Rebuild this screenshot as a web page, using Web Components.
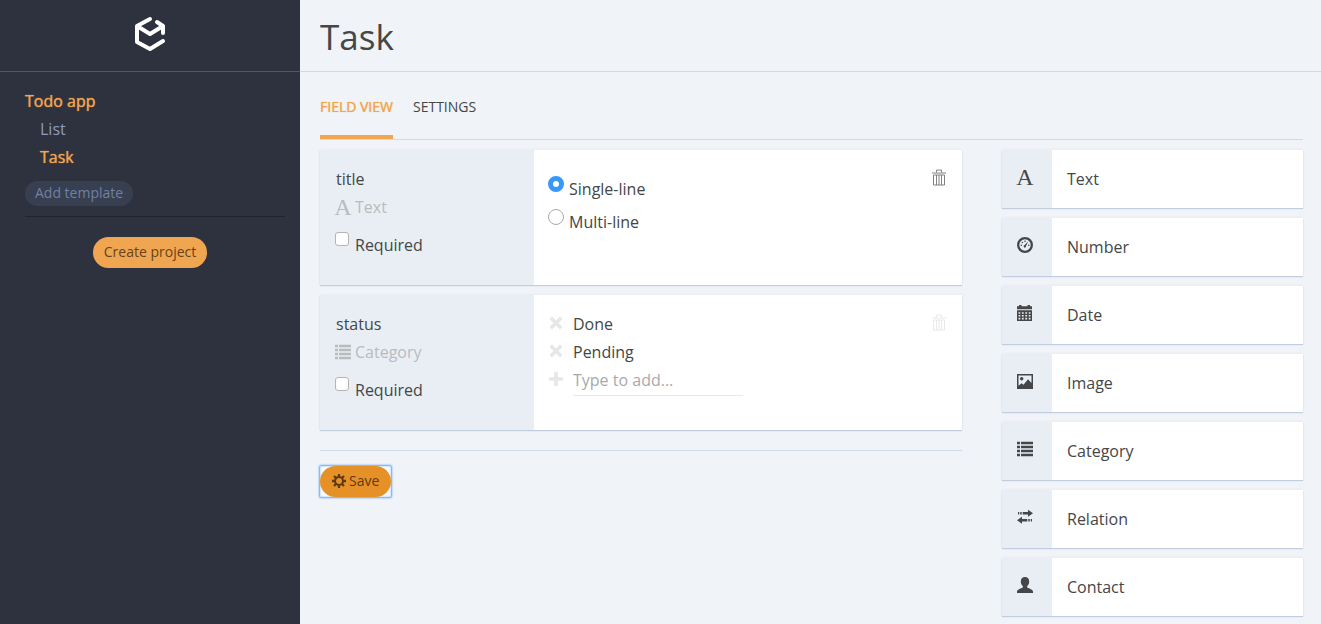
<!DOCTYPE html>
<html lang="en">
<head>
<meta charset="utf-8">
<title>Task – Todo app</title>
<style>
  :root {
    --ink: #444648;
    --accent: #f0a650;
    --panel: #e9eef5;
    --line: #d0d9e8;
    --card-shadow: 0 1px 1px #c3cde0, 0 0 2px #dde3ee;
  }
  body {
    margin: 0;
    background: #f0f3f8;
    color: var(--ink);
    font: 16px/28px "Open Sans", "Noto Sans", sans-serif;
  }
</style>
</head>
<body>
<template-editor></template-editor>

<script>
const bars = [0, 4, 8, 12].map(y => `<path d="M0 ${y + .5}h3v2.6H0zM4 ${y + .5}h12v2.6H4z"/>`).join('');
const ICONS = {
  list: `<g transform="translate(0 .2)">${bars}</g>`,
  gauge: `<path fill-rule="evenodd" d="M8 0a8 8 0 1 1 0 16A8 8 0 0 1 8 0zm0 2.3a5.700 5.700 0 1 0 0 11.400A5.700 5.700 0 0 0 8 2.300z"/>
    <path d="M11.300 4.200 9 9.100a1.200 1.200 0 1 1-1.600-.8z"/><circle cx="4.300" cy="8.200" r=".8"/><circle cx="5.400" cy="5.500" r=".8"/><circle cx="8" cy="4.300" r=".8"/><circle cx="11.800" cy="8.200" r=".8"/>`,
  calendar: `<path fill-rule="evenodd" d="M0 1.300h2V0h2.500v1.300h6V0H13v1.300h2v3H0zM0 5.200h15V16H0zM1.500 7.200v1.600h1.800V7.200zm3.400 0v1.600h1.800V7.200zm3.400 0v1.600h1.800V7.200zm3.400 0v1.600h1.800V7.200zM1.500 10v1.600h1.800V10zm3.400 0v1.600h1.800V10zm3.400 0v1.600h1.800V10zm3.400 0v1.600h1.800V10zM1.500 12.800v1.600h1.800v-1.600zm3.400 0v1.600h1.800v-1.600zm3.400 0v1.600h1.800v-1.600zm3.400 0v1.600h1.800v-1.600z"/>`,
  image: `<path fill-rule="evenodd" d="M0 1h16v15H0zM1.500 2.500v10.300l3-2.600 2 1.500 4.500-5.400 3.500 3.800V2.500z"/><circle cx="4.700" cy="5.800" r="1.700"/>`,
  relation: `<path d="M1 3h1.200v2.600H1zM3.200 3h1.500v2.600H3.200zM5.700 3H11V.8L16 4.300l-5 3.500V5.600H5.700zM15 10h-1.200v2.600H15zM12.800 10h-1.500v2.600h1.500zM10.300 10H5V7.800L0 11.300l5 3.500v-2.200h5.300z"/>`,
  user: `<path d="M8 0c2.600 0 4.200 1.800 4.200 4.400 0 2-.8 3.700-2 4.700v1.300c2.200 1 5.800 2 5.800 4.300V16H0v-1.300c0-2.300 3.600-3.300 5.800-4.300V9.100c-1.200-1-2-2.700-2-4.700C3.800 1.800 5.400 0 8 0z"/>`,
  trash: `<path fill="none" stroke="currentColor" d="M1 3.500h14M5.500 3V.6h5V3M2.500 5.500h11v10h-11zM5.500 5.500v10M8 5.500v10M10.500 5.500v10"/>`,
  cross: `<path d="m1.500 4 2.500-2.500 4 4 4-4L14.500 4l-4 4 4 4-2.500 2.500-4-4-4 4L1.500 12l4-4z"/>`,
  plus: `<path d="M6.200 1h3.600v5.200H15v3.600H9.800V15H6.200V9.800H1V6.200h5.200z"/>`,
  gear: `<g fill="none" stroke="currentColor"><circle cx="8" cy="8" r="4.600" stroke-width="2.400"/><path stroke-width="2.600" d="M8 0v3M8 13v3M0 8h3M13 8h3M2.300 2.300l2.200 2.200M11.500 11.500l2.200 2.200M2.300 13.700l2.200-2.200M11.500 4.500l2.200-2.200"/></g>`
};

function define(name, html, setup) {
  const template = document.createElement('template');
  template.innerHTML = `<style>*{box-sizing:border-box}</style>${html}`;
  customElements.define(name, class extends HTMLElement {
    constructor() {
      super();
      this.attachShadow({ mode: 'open' }).append(template.content.cloneNode(true));
    }
    connectedCallback() { if (setup) setup(this, this.shadowRoot); }
  });
}

/* Square glyph; "letter" is the serif capital used for text fields. */
class UiIcon extends HTMLElement {
  static observedAttributes = ['name'];
  constructor() {
    super();
    this.attachShadow({ mode: 'open' });
  }
  attributeChangedCallback(attribute, previous, name) {
    this.shadowRoot.innerHTML = `
      <style>
        :host { display: inline-flex; flex: none; width: 16px; height: 16px; align-items: center; justify-content: center; }
        svg { display: block; width: 100%; height: 100%; fill: currentColor; }
        span { font: 24px/16px "Liberation Serif", serif; }
      </style>
      ${name === 'letter' ? '<span>A</span>' : `<svg viewBox="0 0 16 16" aria-hidden="true">${ICONS[name]}</svg>`}`;
  }
}
customElements.define('ui-icon', UiIcon);

define('app-sidebar', `
<style>
  :host { display: block; background: #2d323e; }
  header { display: flex; justify-content: center; align-items: center; height: 72px; padding-bottom: 4px; border-bottom: 1px solid #4d586f; }
  svg { width: 32px; height: 36px; }
  nav { padding: 15px 15px 0 25px; }
  a { display: block; color: #8d9cbe; text-decoration: none; }
  .on { color: var(--accent); text-shadow: 0 0 1px var(--accent); }
  .child { padding-left: 15px; }
  button { display: block; border: 0; font: inherit; cursor: pointer; }
  .add { height: 25px; margin-top: 10px; padding: 0 10px 2px; border-radius: 13px; background: #383f50; color: #7180a3; font-size: 14px; line-height: 22px; }
  hr { height: 1px; margin: 10px 0 20px; border: 0; background: #20242d; }
  .create { height: 31px; margin: 0 auto; padding: 0 11px 2px; border-radius: 16px; background: var(--accent); color: #67431a; font-size: 14px; line-height: 28px; }
  .wrap { padding-right: 10px; }
</style>
<header>
  <svg viewBox="0 0 32 36" fill="none" stroke="#fff" stroke-width="4" stroke-linecap="round" stroke-linejoin="round" role="img" aria-label="Logo">
    <path d="M16 3 3 10v16l13 7 13-8M3 10l13 8 13-8v7M29 10l-6-4"/>
  </svg>
</header>
<nav>
  <a class="on" href="#app">Todo app</a>
  <a class="child" href="#list">List</a>
  <a class="child on" href="#task" aria-current="page">Task</a>
  <button class="add" type="button">Add template</button>
  <hr>
  <div class="wrap"><button class="create" type="button">Create project</button></div>
</nav>`);

define('page-header', `
<style>
  :host { display: block; height: 72px; padding: 10px 20px; border-bottom: 1px solid var(--line); }
  h1 { margin: 0; font-size: 35px; line-height: 54px; font-weight: 400; }
</style>
<h1><slot></slot></h1>`);

define('tab-bar', `
<style>
  :host { display: flex; gap: 20px; border-bottom: 1px solid var(--line); }
  a { padding: 21px 0 14px; border-bottom: 4px solid transparent; color: var(--ink); font-size: 14px; text-transform: uppercase; text-decoration: none; }
  .on { border-color: var(--accent); color: var(--accent); text-shadow: 0 0 1px var(--accent); }
</style>
<a class="on" href="#fields">Field view</a>
<a href="#settings">Settings</a>`);

define('field-card', `
<style>
  :host { display: grid; grid-template-columns: 1fr 2fr; min-height: 135px; background: #fff; box-shadow: var(--card-shadow); }
  .side { padding: 15px; background: var(--panel); }
  .name { padding-left: 1px; }
  .kind { display: flex; align-items: center; gap: 4px; color: #b9bbbd; }
  label { display: flex; gap: 6px; margin-top: 10px; }
  input { appearance: none; width: 14px; height: 14px; margin: 1px 0; border: 1px solid #b4b4b4; border-radius: 3px; background: #fff; }
  .body { display: flex; justify-content: space-between; padding: 15px 15px 15px 14px; }
  button { align-self: flex-start; display: flex; margin-top: 4px; padding: 0; border: 0; background: none; color: #808284; cursor: pointer; }
  :host([locked]) button { color: #e8e9ea; }
  button ui-icon { height: 17px; }
</style>
<div class="side">
  <div class="name"></div>
  <div class="kind"><ui-icon></ui-icon><span></span></div>
  <label><input type="checkbox">Required</label>
</div>
<div class="body"><slot></slot><button type="button" aria-label="Delete field"><ui-icon name="trash"></ui-icon></button></div>`,
(host, root) => {
  root.querySelector('.name').textContent = host.getAttribute('name');
  root.querySelector('.kind span').textContent = host.getAttribute('kind');
  root.querySelector('.kind ui-icon').setAttribute('name', host.getAttribute('icon'));
});

define('line-options', `
<style>
  :host { display: flex; flex-direction: column; gap: 5px; padding-top: 10px; }
  label { display: flex; gap: 5px; }
  input { appearance: none; width: 16px; height: 16px; margin: 1px 0; border: 1px solid #a9a9a9; border-radius: 50%; background: #fff; }
  input:checked { border: 5px solid #3797fb; }
</style>
<label><input type="radio" name="lines" checked>Single-line</label>
<label><input type="radio" name="lines">Multi-line</label>`);

define('category-options', `
<style>
  :host { display: block; }
  .row { display: flex; gap: 9px; }
  ui-icon, button { margin-top: 5px; color: #e5e7e9; }
  button { display: flex; height: 16px; padding: 0; border: 0; background: none; cursor: pointer; }
  button ui-icon { margin: 0; }
  input { width: 170px; height: 30px; padding: 0 0 2px; border: 0; border-bottom: 1px solid #e6e9ed; background: none; color: inherit; font: inherit; }
  input::placeholder { color: #a7a9ab; opacity: 1; }
</style>
<div class="row"><button type="button" aria-label="Remove Done"><ui-icon name="cross"></ui-icon></button>Done</div>
<div class="row"><button type="button" aria-label="Remove Pending"><ui-icon name="cross"></ui-icon></button>Pending</div>
<div class="row"><ui-icon name="plus"></ui-icon><input type="text" aria-label="New category" placeholder="Type to add..."></div>`);

define('type-card', `
<style>
  :host { display: flex; height: 58px; background: #fff; box-shadow: var(--card-shadow); }
  .mark { width: 50px; padding: 19px 15px 0; line-height: 16px; background: var(--panel); }
  .label { padding: 15px; }
</style>
<div class="mark"><ui-icon></ui-icon></div><div class="label"><slot></slot></div>`,
(host, root) => root.querySelector('ui-icon').setAttribute('name', host.getAttribute('icon')));

define('save-button', `
<style>
  :host { display: inline-flex; background: #fafcff; border-radius: 1px; box-shadow: 0 0 2px 1px #5ca8fa, inset 0 0 2px #74b4fa; }
  button { display: flex; align-items: center; gap: 3px; height: 31px; padding: 0 12px 2px; border: 0; border-radius: 16px; background: #e69127; color: #5f3a10; font: inherit; font-size: 14px; line-height: 28px; cursor: pointer; }
  ui-icon { width: 14px; height: 14px; }
</style>
<button type="submit"><ui-icon name="gear"></ui-icon><slot></slot></button>`);

define('template-editor', `
<style>
  :host { display: grid; grid-template-columns: 300px minmax(0, 1fr); min-height: 100vh; }
  .content { padding: 0 18px 8px 20px; }
  .grid { display: grid; grid-template-columns: repeat(3, minmax(0, 1fr)); gap: 40px; padding-top: 10px; }
  .fields { grid-column: span 2; }
  .fields, .types { display: flex; flex-direction: column; gap: 10px; }
  form { display: block; margin-top: 10px; padding-top: 15px; border-top: 1px solid var(--line); }
</style>
<app-sidebar></app-sidebar>
<main>
  <page-header>Task</page-header>
  <div class="content">
    <tab-bar></tab-bar>
    <div class="grid">
      <section class="fields">
        <field-card name="title" kind="Text" icon="letter"><line-options></line-options></field-card>
        <field-card name="status" kind="Category" icon="list" locked><category-options></category-options></field-card>
        <form><save-button>Save</save-button></form>
      </section>
      <aside class="types">
        <type-card icon="letter">Text</type-card>
        <type-card icon="gauge">Number</type-card>
        <type-card icon="calendar">Date</type-card>
        <type-card icon="image">Image</type-card>
        <type-card icon="list">Category</type-card>
        <type-card icon="relation">Relation</type-card>
        <type-card icon="user">Contact</type-card>
      </aside>
    </div>
  </div>
</main>`);
</script>
</body>
</html>
